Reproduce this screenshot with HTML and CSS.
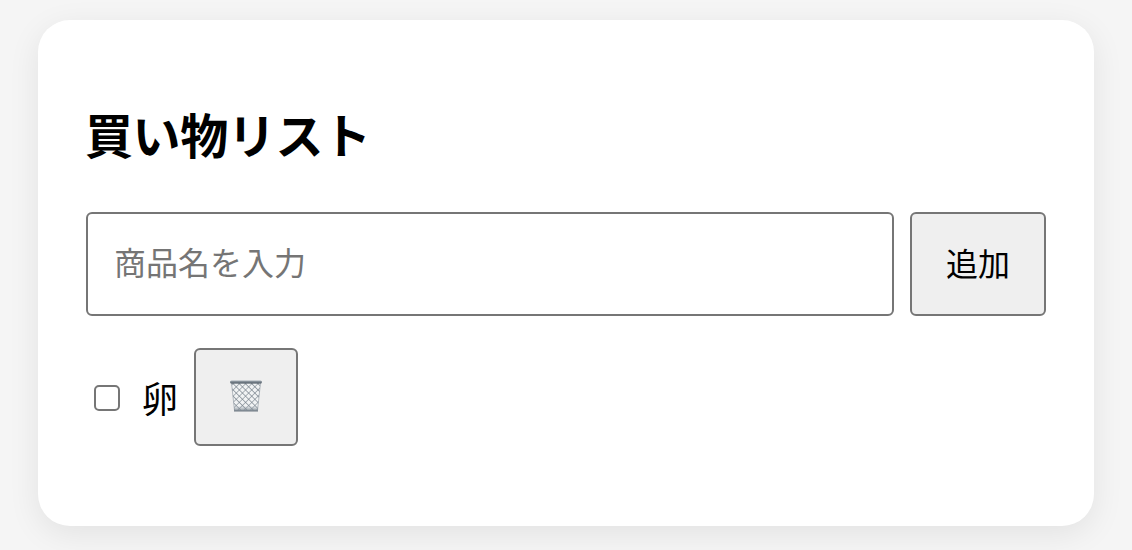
FILE: index.html
```html
<!DOCTYPE html>
<html lang="ja">
<head>
  <meta charset="UTF-8">
  <meta name="viewport" content="width=device-width, initial-scale=1.0">
  <title>買い物リスト</title>
  <link rel="stylesheet" href="styles.css">
</head>
<body>
  <div class="card">
    <h1>買い物リスト</h1>

    <div class="add-row">
      <input type="text" class="item-input" placeholder="商品名を入力">
      <button class="add-btn">追加</button>
    </div>

    <ul class="list">
      <li class="list-item">
        <input type="checkbox" class="item-check">
        <span class="item-name">卵</span>
        <button class="delete-btn" aria-label="削除">
          <!-- wastebasket -->
          <svg class="trash-icon" viewBox="0 0 32 32" width="32" height="32">
            <defs>
              <pattern id="mesh" width="4.4" height="4.4" patternUnits="userSpaceOnUse" patternTransform="rotate(45)">
                <rect width="4.4" height="4.4" fill="#f1f3f4"/>
                <path d="M0 0H4.4M0 0V4.4" stroke="#75808a" stroke-width="1.1" fill="none"/>
              </pattern>
              <linearGradient id="rim" x1="0" y1="0" x2="0" y2="1">
                <stop offset="0" stop-color="#a3adb5"/>
                <stop offset="1" stop-color="#4f5a64"/>
              </linearGradient>
              <linearGradient id="base" x1="0" y1="0" x2="0" y2="1">
                <stop offset="0" stop-color="#a9b2ba" stop-opacity="0"/>
                <stop offset="1" stop-color="#6d7882"/>
              </linearGradient>
            </defs>
            <path d="M1.5 3H30.5L27.5 30.5H4.5Z" fill="url(#mesh)"/>
            <path d="M1.5 3H30.5L27.5 30.5H4.5Z" fill="none" stroke="#8a949d" stroke-width=".6"/>
            <rect x="4" y="25.5" width="24" height="6" fill="url(#base)"/>
            <rect x="0" y="0.5" width="32" height="3" rx="1.5" fill="url(#rim)"/>
          </svg>
        </button>
      </li>
    </ul>
  </div>
</body>
</html>
```

FILE: styles.css
```css
* {
  box-sizing: border-box;
}
body {
  margin: 0;
  padding: 20px 38px 24px;
  background-color: #f5f5f5;
  font-family: "Noto Sans CJK JP", "Liberation Sans", sans-serif;
  color: #000;
}
.card {
  height: 506px;
  padding: 48px;
  background-color: #fff;
  border-radius: 32px;
  box-shadow: 0 8px 32px rgba(0,0,0,0.08);
}
h1 {
  margin: 36px 0 50px -1px;
  font-size: 48px;
  line-height: 58px;
  font-weight: 700;
  letter-spacing: -0.4px;
}
.add-row {
  display: flex;
  gap: 16px;
  height: 104px;
}
.item-input {
  flex: 1;
  padding: 0 26px 6px;
  border: 2px solid #767676;
  border-radius: 6px;
  font-family: inherit;
  font-size: 32px;
}
.item-input::placeholder {
  color: #757575;
}
.add-btn,
.delete-btn {
  border: 2px solid #767676;
  border-radius: 6px;
  background-color: #efefef;
  font-family: inherit;
  color: #000;
}
.add-btn {
  width: 136px;
  padding: 0 0 4px;
  font-size: 32px;
}
.list {
  list-style: none;
  margin: 32px 0 0;
  padding: 0;
}
.list-item {
  display: flex;
  align-items: center;
  height: 98px;
}
.item-check {
  appearance: none;
  width: 26px;
  height: 26px;
  margin: 2px 0 0 8px;
  border: 2px solid #767676;
  border-radius: 5px;
  background-color: #fff;
}
.item-name {
  margin-left: 22px;
  font-size: 36px;
  line-height: 52px;
}
.delete-btn {
  display: flex;
  align-items: center;
  justify-content: center;
  width: 104px;
  height: 98px;
  margin-left: 16px;
  padding: 0 0 2px;
}
.trash-icon {
  display: block;
}
```
